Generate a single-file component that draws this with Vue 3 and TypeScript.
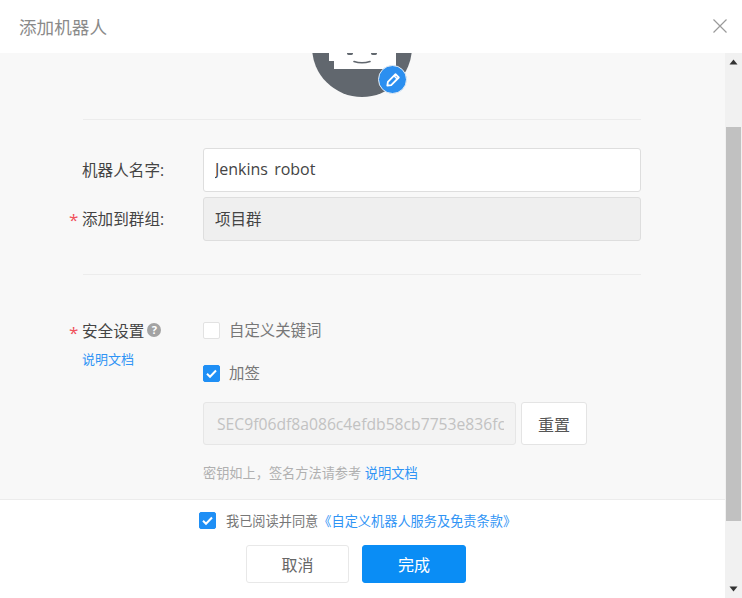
<script setup lang="ts">
import { ref } from 'vue'

const name = ref<string>('Jenkins robot')
const group = ref<string>('项目群')
const secret = ref<string>('SEC9f06df8a086c4efdb58cb7753e836fc1d2a7e4')
const useKeyword = ref<boolean>(false)
const useSign = ref<boolean>(true)
const agreed = ref<boolean>(true)
</script>

<template>
  <div class="dialog">
    <header class="head">
      <span class="title">添加机器人</span>
      <svg class="close" width="14" height="14" viewBox="0 0 14 14" aria-label="关闭">
        <path d="M.5.5l13 13M13.500.5l-13 13" stroke="#9a9a9a" stroke-width="1.2" fill="none" />
      </svg>
    </header>

    <div class="main">
      <div class="column">
        <section class="body">
          <div class="avatar">
            <svg width="100" height="100" viewBox="0 0 100 100">
              <circle cx="50" cy="50" r="50" fill="#61676e" />
              <path d="M17 0h67v72H22v-8h-5z" fill="#fff" />
              <ellipse cx="38" cy="56.500" rx="3" ry="1.500" fill="#61676e" />
              <ellipse cx="62" cy="56.500" rx="3" ry="1.500" fill="#61676e" />
              <path d="M42 64.500q8 2.500 16 0" stroke="#61676e" stroke-width="1.600" fill="none" stroke-linecap="round" />
            </svg>
            <span class="badge">
              <svg width="16" height="16" viewBox="0 0 16 16">
                <path d="M10.500 2.200l3.300 3.300-7.600 7.600-3.900.6.600-3.900z" fill="none" stroke="#fff" stroke-width="1.800" stroke-linejoin="round" />
                <path d="M9 3.800l3.200 3.200" stroke="#fff" stroke-width="1.500" />
              </svg>
            </span>
          </div>

          <div class="rule first"></div>

          <div class="row name-row">
            <label class="label">机器人名字:</label>
            <div class="field"><div class="clip value">{{ name }}</div></div>
          </div>
          <div class="row group-row">
            <label class="label required">添加到群组:</label>
            <div class="field off"><div class="clip group-value">{{ group }}</div></div>
          </div>

          <div class="rule second"></div>

          <div class="row security">
            <div class="label-stack">
              <label class="label required inline">
                安全设置
                <span class="help">?</span>
              </label>
              <a class="doc side">说明文档</a>
            </div>
            <div class="options">
              <div class="check-line">
                <span class="box" :class="{ on: useKeyword }" @click="useKeyword = !useKeyword">
                  <svg v-if="useKeyword" width="13" height="13" viewBox="0 0 13 13"><path d="M2 6.800l3 3 6-6.300" /></svg>
                </span>
                <span class="opt-text">自定义关键词</span>
              </div>
              <div class="check-line sign">
                <span class="box" :class="{ on: useSign }" @click="useSign = !useSign">
                  <svg v-if="useSign" width="13" height="13" viewBox="0 0 13 13"><path d="M2 6.800l3 3 6-6.300" /></svg>
                </span>
                <span class="opt-text">加签</span>
              </div>
              <div class="secret-row">
                <div class="field secret"><div class="clip">{{ secret }}</div></div>
                <button class="btn reset" type="button">重置</button>
              </div>
              <p class="hint">密钥如上&#65292;签名方法请参考 <a class="doc hint-doc">说明文档</a></p>
            </div>
          </div>
        </section>

        <footer class="foot">
          <div class="agree">
            <span class="box small" :class="{ on: agreed }" @click="agreed = !agreed">
              <svg v-if="agreed" width="13" height="13" viewBox="0 0 13 13"><path d="M2 6.800l3 3 6-6.300" /></svg>
            </span>
            <span class="agree-text">我已阅读并同意</span><a class="doc terms">《自定义机器人服务及免责条款》</a>
          </div>
          <div class="actions">
            <button class="btn cancel" type="button">取消</button>
            <button class="btn primary" type="button">完成</button>
          </div>
        </footer>
      </div>

      <aside class="scrollbar">
        <svg class="arrow" width="9" height="6" viewBox="0 0 9 6"><path d="M4.500.5L8.500 5.500H.5z" fill="#333" /></svg>
        <div class="thumb"></div>
        <svg class="arrow" width="9" height="6" viewBox="0 0 9 6"><path d="M4.500 5.500L.5.500h8z" fill="#333" /></svg>
      </aside>
    </div>
  </div>
</template>

<style>
html,
body {
  margin: 0;
  background: #fff;
}
</style>

<style scoped>
.dialog {
  width: 742px;
  height: 598px;
  display: flex;
  flex-direction: column;
  overflow: hidden;
  background: #fff;
  font-family: "Open Sans", "Noto Sans CJK SC", sans-serif;
  color: #444;
}
.head {
  height: 53px;
  flex: none;
  display: flex;
  align-items: center;
  justify-content: space-between;
  padding: 0 15px 0 19px;
  box-sizing: border-box;
}
.title {
  font-size: 17.600px;
  color: #8a8a8a;
}
.close {
  margin-top: -1px;
}
.main {
  flex: 1;
  min-height: 0;
  display: flex;
}
.column {
  width: 725px;
  display: flex;
  flex-direction: column;
}
.body {
  height: 446px;
  flex: none;
  box-sizing: border-box;
  overflow: hidden;
  background: #f8f8f8;
  padding: 0 84px 0 83px;
}
.avatar {
  position: relative;
  width: 100px;
  height: 100px;
  margin: -56px auto 0;
}
.avatar > svg {
  display: block;
}
.badge {
  position: absolute;
  left: 66px;
  top: 68px;
  width: 27px;
  height: 27px;
  border-radius: 50%;
  background: #2b8ff0;
  border: 1px solid #e8eef4;
  display: flex;
  align-items: center;
  justify-content: center;
}
.rule {
  height: 1px;
  background: #ececec;
}
.rule.first {
  margin-top: 22px;
}
.rule.second {
  margin-top: 33px;
}
.row {
  display: flex;
}
.name-row {
  margin-top: 28px;
  align-items: center;
}
.group-row {
  margin-top: 5px;
  align-items: center;
}
.label {
  position: relative;
  width: 120px;
  flex: none;
  box-sizing: border-box;
  margin-left: -1px;
  margin-right: 1px;
  margin-top: -2px;
  font-size: 15.600px;
  color: #444;
}
.required::before {
  content: "*";
  position: absolute;
  left: -13px;
  top: 1px;
  color: #f0505a;
  font-size: 17px;
}
.field {
  flex: 1;
  min-width: 0;
  height: 44px;
  box-sizing: border-box;
  border: 1px solid #dedede;
  border-radius: 3px;
  background: #fff;
  padding: 0 11px;
  display: flex;
  align-items: center;
  font-size: 16px;
  color: #444;
}
.field.off {
  background: #efefef;
}
.clip {
  white-space: nowrap;
  overflow: hidden;
  width: 100%;
}
.value {
  word-spacing: 2px;
  margin-top: -2px;
}
.group-value {
  font-size: 15.500px;
  margin-top: -2px;
}
.security {
  margin-top: 47px;
}
.label-stack {
  width: 120px;
  flex: none;
  display: flex;
  flex-direction: column;
}
.inline {
  display: flex;
  align-items: center;
  gap: 3px;
  height: 20px;
  margin-top: -2px;
}
.help {
  width: 14px;
  height: 14px;
  border-radius: 50%;
  background: #a3a3a3;
  color: #fff;
  font-size: 11px;
  font-weight: 700;
  line-height: 14px;
  text-align: center;
}
.doc {
  color: #2f94f5;
  font-size: 13px;
}
.side {
  margin: 9px 0 0 -1px;
  line-height: 20px;
}
.options {
  flex: 1;
  min-width: 0;
}
.check-line {
  display: flex;
  align-items: center;
  height: 17px;
  gap: 10px;
}
.sign {
  margin-top: 26px;
}
.box {
  width: 17px;
  height: 17px;
  flex: none;
  box-sizing: border-box;
  border: 1px solid #e2e2e2;
  border-radius: 2px;
  background: #fff;
  display: flex;
  align-items: center;
  justify-content: center;
  cursor: pointer;
}
.box.on {
  background: #1f8ff5;
  border-color: #1f8ff5;
}
.box svg path {
  fill: none;
  stroke: #fff;
  stroke-width: 2;
}
.opt-text {
  font-size: 15.400px;
  color: #777;
  line-height: 17px;
  margin-left: -1px;
}
.secret-row {
  display: flex;
  gap: 5px;
  margin-top: 20px;
}
.secret {
  flex: none;
  width: 313px;
  height: 43px;
  font-size: 15.700px;
  color: #c2c2c2;
  background: #f3f3f3;
  border-color: #e6e6e6;
  padding: 0 11px 0 13px;
}
.btn {
  font-family: inherit;
  cursor: pointer;
  border-radius: 3px;
  box-sizing: border-box;
  padding: 0;
  font-size: 16px;
}
.reset {
  width: 66px;
  height: 43px;
  background: #fff;
  border: 1px solid #e4e4e4;
  color: #555;
}
.hint {
  margin: 19px 0 0;
  font-size: 13.200px;
  line-height: 18px;
  color: #b0b0b0;
}
.hint-doc {
  font-size: 13.300px;
}
.foot {
  flex: 1;
  background: #fff;
  border-top: 1px solid #ececec;
  box-sizing: border-box;
}
.agree {
  display: flex;
  align-items: center;
  height: 17px;
  margin: 12px 0 0 199px;
}
.small {
  margin-right: 10px;
}
.agree-text {
  font-size: 13.200px;
  color: #777;
}
.terms {
  font-size: 13.200px;
}
.actions {
  display: flex;
  gap: 13px;
  margin: 16px 0 0 246px;
}
.cancel {
  width: 103px;
  height: 38px;
  background: #fff;
  border: 1px solid #e8e8e8;
  color: #666;
}
.primary {
  width: 104px;
  height: 38px;
  background: #0a8df5;
  border: 1px solid #0a8df5;
  color: #fff;
}
.scrollbar {
  width: 17px;
  flex: none;
  background: #f1f1f1;
  display: flex;
  flex-direction: column;
  align-items: center;
  padding: 6px 0;
  box-sizing: border-box;
}
.arrow {
  flex: none;
}
.thumb {
  width: 15px;
  height: 394px;
  background: #c1c1c1;
  margin-top: 62px;
  margin-bottom: auto;
}
</style>
